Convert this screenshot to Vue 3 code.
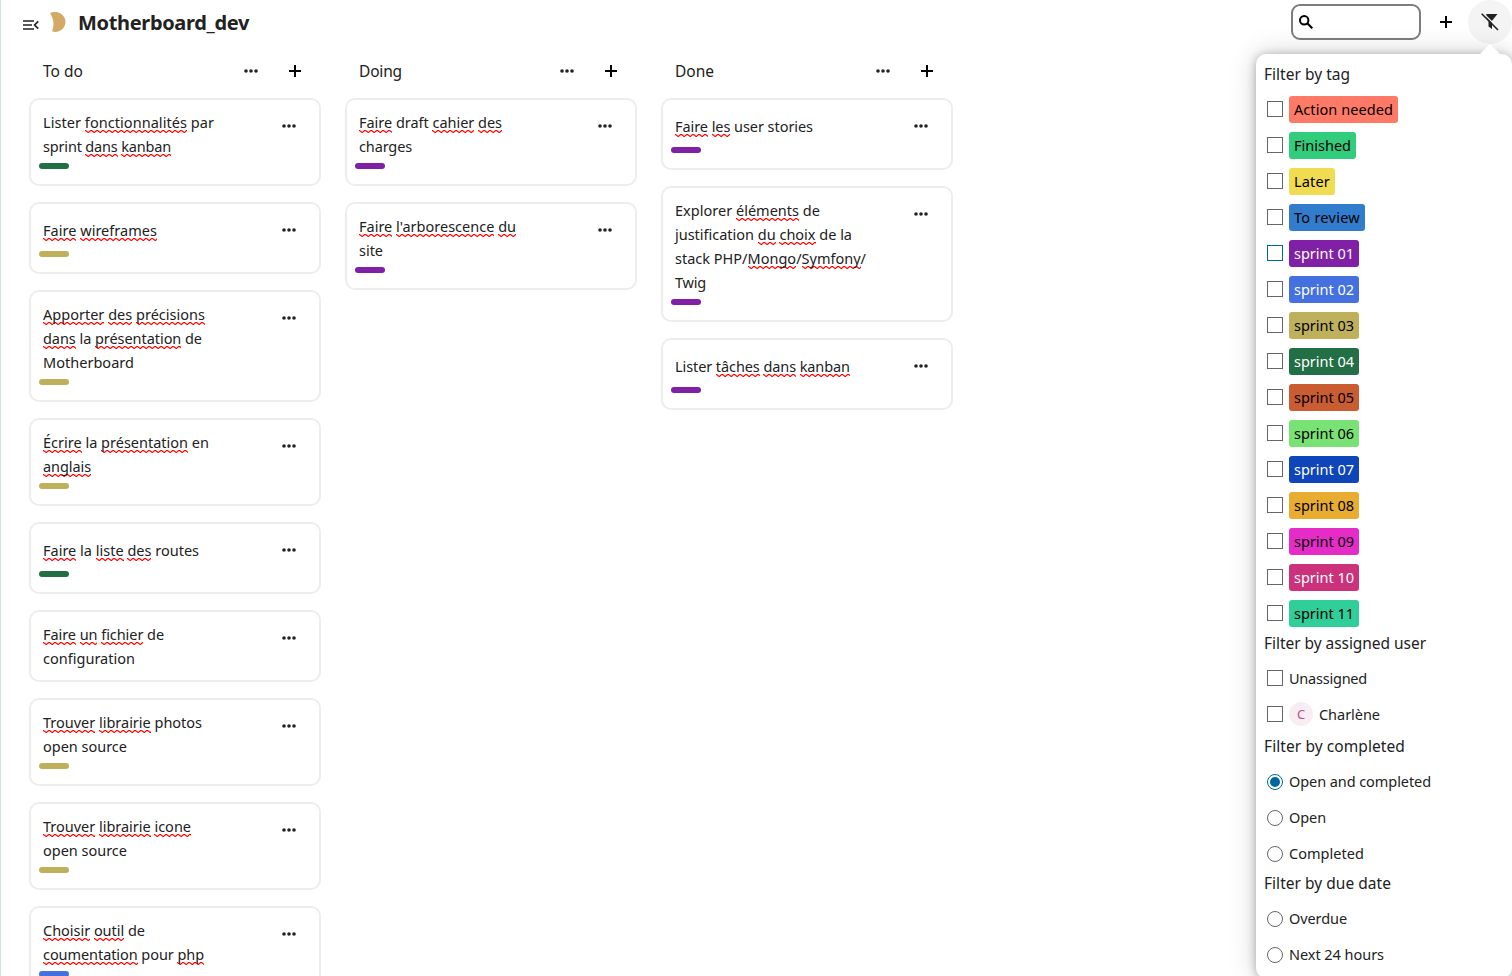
<script setup>
const P = '#7f20a7'
const O = '#bfb15c'
const G = '#226f45'
const B = '#4470e0'
// Card lines: text with *misspelled* words, and the width the line occupies.
const columns = [
  { name: 'To do', w: 40, cards: [
    { lines: [['Lister *fonctionnalités* par', 171], ['sprint *dans* *kanban*', 128]], tag: G },
    { lines: [['*Faire* *wireframes*', 114]], tag: O },
    { lines: [['*Apporter* *des* *précisions*', 162], ['*dans* la *présentation* de', 159], ['Motherboard', 91]], tag: O },
    { lines: [['*Écrire* la *présentation* en', 166], ['*anglais*', 48]], tag: O },
    { lines: [['*Faire* la *liste* *des* routes', 156]], tag: G },
    { lines: [['*Faire* *un* *fichier* de', 121], ['configuration', 92]] },
    { lines: [['*Trouver* *librairie* photos', 159], ['open source', 84]], tag: O },
    { lines: [['*Trouver* *librairie* *icone*', 148], ['open source', 84]], tag: O },
    { lines: [['*Choisir* *outil* de', 102], ['*coumentation* pour *php*', 161]], tag: B },
  ] },
  { name: 'Doing', w: 43, cards: [
    { lines: [['*Faire* draft *cahier* *des*', 143], ['charges', 53]], tag: P },
    { lines: [["*Faire* *l'arborescence* *du*", 157], ['site', 24]], tag: P },
  ] },
  { name: 'Done', w: 39, cards: [
    { lines: [['*Faire* *les* user stories', 138]], tag: P },
    { lines: [['Explorer *éléments* de', 145], ['justification *du* *choix* de la', 177], ['stack PHP/*Mongo*/*Symfony*/', 191], ['Twig', 31]], tag: P },
    { lines: [['Lister *tâches* *dans* *kanban*', 175]], tag: P },
  ] },
]
const tags = [
  ['Action needed', '#ff7a66', 0, 99], ['Finished', '#31cc7c', 0, 57], ['Later', '#f1db50', 0, 36],
  ['To review', '#317ccc', 0, 66], ['sprint 01', P, 1, 60], ['sprint 02', B, 1, 60],
  ['sprint 03', O, 0, 60], ['sprint 04', G, 1, 60], ['sprint 05', '#c95c30', 0, 60],
  ['sprint 06', '#78e274', 0, 60], ['sprint 07', '#0e45b8', 1, 60], ['sprint 08', '#e8ac30', 0, 60],
  ['sprint 09', '#e62cc6', 0, 60], ['sprint 10', '#cc317c', 1, 60], ['sprint 11', '#30ce98', 0, 60],
]
const completed = [['Open and completed', 142], ['Open', 37], ['Completed', 75]]
const due = [['Overdue', 58], ['Next 24 hours', 95]]
const parts = (t) => t.split('*').map((s, i) => ({ s, bad: i % 2 === 1 })).filter((p) => p.s)

// Tracks the text so that it takes exactly the given width.
const vFit = {
  mounted(el, { value }) {
    const natural = el.getBoundingClientRect().width
    el.style.letterSpacing = (value - natural) / el.textContent.length + 'px'
  },
}
</script>

<template>
  <div class="app">
    <header class="top">
      <svg class="menu" width="16" height="12" viewBox="0 0 16 12"><path d="M0 2h11M0 6h9M0 10h11M15.2 2.400L11.600 6l3.600 3.600" fill="none" stroke="#222" stroke-width="1.700" /></svg>
      <svg class="moon" width="16" height="20" viewBox="0 0 16 20"><path d="M0 1.200C2-.1 5-.2 7.500.2A10 10 0 0 1 7.500 19.800C5.500 20.100 3.500 19.900 2 19.300C4.500 13.500 3.800 6.500 0 1.200z" fill="#d2a965" /></svg>
      <h1><span v-fit="171">Motherboard_dev</span></h1>
      <div class="search">
        <svg width="14" height="14" viewBox="0 0 14 14"><circle cx="5.200" cy="5.200" r="4.200" fill="none" stroke="#000" stroke-width="2" /><path d="M8.300 8.300l5 5" stroke="#000" stroke-width="2.200" /></svg>
      </div>
      <svg class="plus" width="12" height="12"><path d="M6 0v12M0 6h12" stroke="#000" stroke-width="2" /></svg>
      <div class="filter">
        <svg width="18" height="18" viewBox="0 0 18 18"><path d="M5.300 1H16.500L11 7.800V16L7.500 13.500V7.500L5.300 5z" fill="#222" /><path d="M1.700-.3l17 17" stroke="#f4f4f4" stroke-width="1.300" /><path d="M-.3.300L5.500 6v2L0 3z" fill="#f4f4f4" /><path d="M.7.700l16.300 16.300" stroke="#222" stroke-width="1.600" /></svg>
      </div>
    </header>

    <main class="board">
      <section v-for="c in columns" :key="c.name" class="column">
        <div class="head">
          <h2><span v-fit="c.w">{{ c.name }}</span></h2>
          <svg class="dots" width="14" height="4"><circle cx="2" cy="2" r="1.800" /><circle cx="7" cy="2" r="1.800" /><circle cx="12" cy="2" r="1.800" /></svg>
          <svg class="plus" width="12" height="12"><path d="M6 0v12M0 6h12" stroke="#000" stroke-width="2" /></svg>
        </div>
        <article v-for="(card, i) in c.cards" :key="i" class="card">
          <div class="row">
            <div class="title">
              <div v-for="l in card.lines" :key="l[0]" class="line"><span v-fit="l[1]"><span v-for="(p, k) in parts(l[0])" :key="k" :class="{ bad: p.bad }">{{ p.s }}</span></span></div>
            </div>
            <svg class="dots" width="14" height="4"><circle cx="2" cy="2" r="1.800" /><circle cx="7" cy="2" r="1.800" /><circle cx="12" cy="2" r="1.800" /></svg>
          </div>
          <div v-if="card.tag" class="labels"><i :style="{ background: card.tag }"></i></div>
        </article>
      </section>
    </main>

    <aside class="panel">
      <h3><span v-fit="86">Filter by tag</span></h3>
      <div v-for="t in tags" :key="t[0]" class="opt tall">
        <i class="box" :class="{ hot: t[0] === 'sprint 01' }"></i>
        <span class="tag" :style="{ background: t[1], color: t[2] ? '#fff' : '#000' }"><span v-fit="t[3]">{{ t[0] }}</span></span>
      </div>
      <h3><span v-fit="162">Filter by assigned user</span></h3>
      <div class="opt"><i class="box"></i><span v-fit="78">Unassigned</span></div>
      <div class="opt"><i class="box"></i><b class="avatar">C</b><span v-fit="61">Charlène</span></div>
      <h3 class="late"><span v-fit="141">Filter by completed</span></h3>
      <div v-for="(o, i) in completed" :key="o[0]" class="opt"><i class="radio" :class="{ on: i === 0 }"></i><span v-fit="o[1]">{{ o[0] }}</span></div>
      <h3><span v-fit="127">Filter by due date</span></h3>
      <div v-for="o in due" :key="o[0]" class="opt"><i class="radio"></i><span v-fit="o[1]">{{ o[0] }}</span></div>
    </aside>
  </div>
</template>

<style>
body { margin: 0; overflow: hidden; background: #fff; }
</style>

<style scoped>
* { box-sizing: border-box; }
.app { position: relative; width: 1512px; height: 976px; overflow: hidden; border-left: 1px solid #cfe2ea; color: #222; font: 14.5px/24px "Noto Sans", sans-serif; white-space: pre; }
svg { display: block; flex: none; }
h1, h2, h3 { margin: 0; font-weight: 400; }
.top { display: flex; align-items: center; height: 44px; padding-left: 22px; }
.menu { margin-top: 6px; }
.moon { margin-left: 11px; }
h1 { flex: 1; margin-left: 12px; padding-top: 1px; font-size: 20px; font-weight: 700; }
.search { display: flex; align-items: center; width: 130px; height: 36px; padding-left: 6px; border: 2px solid #7d7d7d; border-radius: 9px; margin-right: 19px; }
.filter { display: grid; place-items: center; width: 44px; height: 44px; margin-left: 16px; border-radius: 50%; background: #f4f4f4; }
.board { display: flex; gap: 24px; padding-left: 28px; }
.column { display: flex; flex-direction: column; gap: 16px; width: 292px; }
.head { display: flex; align-items: center; height: 54px; margin-bottom: -16px; padding: 0 20px 0 14px; }
.head h2 { flex: 1; font-size: 15.5px; }
.head .dots { margin-right: 31px; }
.dots { fill: #222; }
.card { flex: none; padding: 7px 23px 5px 12px; border: 2px solid #ededed; border-radius: 10px; }
.row { display: flex; justify-content: space-between; min-height: 40px; }
.row .dots { margin-top: 17px; }
.title { display: flex; flex-direction: column; justify-content: center; padding: 3px 0 5px; }
.line { height: 24px; }
.bad { padding-bottom: 1px; background: url("data:image/svg+xml,%3Csvg xmlns='http://www.w3.org/2000/svg' width='6' height='3'%3E%3Cpath d='M-1 1.200L0 .600L.700 .600L3 2.400L3.500 2.400L5.500 .600L7 .600' fill='none' stroke='red' stroke-width='1.200'/%3E%3C/svg%3E") repeat-x left bottom; }
.labels { height: 16px; margin-left: -4px; }
.labels i { display: block; width: 30px; height: 6px; border-radius: 3px; }
.panel { position: absolute; left: 1255px; top: 54px; width: 256px; height: 924px; padding: 8px 8px 0; border-radius: 10px; background: #fff; box-shadow: 0 1px 10px rgba(0, 0, 0, .28), 0 0 28px rgba(0, 0, 0, .18); }
.panel::before { content: ""; position: absolute; left: 224px; top: -10px; border: 10px solid transparent; border-top: 0; border-bottom-color: #fff; }
h3 { height: 29px; font-size: 15.5px; }
.late { margin-top: 2px; }
.opt { display: flex; align-items: center; height: 36px; padding-left: 3px; }
.box, .radio { flex: none; width: 16px; height: 16px; margin-right: 6px; border: 1px solid #666; }
.tall .box { margin-bottom: 1px; }
.hot { border-color: #00679e; }
.radio { margin-top: 2px; border-radius: 50%; }
.on { border: 1.500px solid #00679e; padding: 2px; background: #00679e content-box; }
.tag { height: 27px; padding: 0 5px; border-radius: 3px; line-height: 26px; }
.avatar { display: grid; place-items: center; width: 24px; height: 24px; margin-right: 6px; border-radius: 50%; background: #f8edf3; color: #c0508f; font-size: 13px; font-weight: 400; }
</style>
